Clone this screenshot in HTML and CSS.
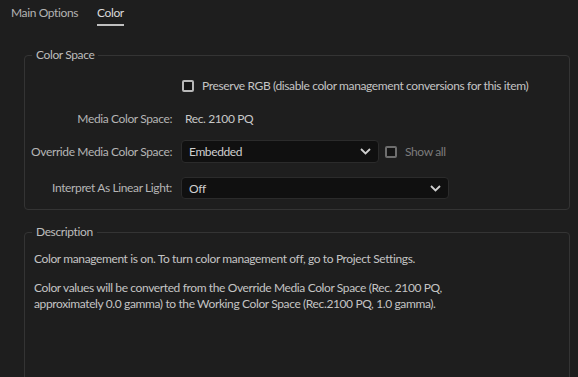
FILE: index.html
```html
<!DOCTYPE html>
<html>
<head>
<meta charset="utf-8">
<link rel="stylesheet" href="styles.css">
</head>
<body>
<div class="tabs">
  <span class="tab">Main Options</span>
  <span class="tab active">Color</span>
</div>

<fieldset class="group group-cs">
  <legend>Color Space</legend>
  <div class="grid">
    <span class="lbl"></span>
    <label class="check"><span class="box"></span><span>Preserve RGB (disable color management conversions for this item)</span></label>

    <span class="lbl">Media Color Space:</span>
    <span class="val">Rec. 2100 PQ</span>

    <span class="lbl">Override Media Color Space:</span>
    <div class="inline">
      <div class="select sel-short"><span>Embedded</span>
        <svg class="chev" width="11" height="7" viewBox="0 0 11 7"><path d="M1 1 L5.5 5.5 L10 1" fill="none" stroke="#cfcfcf" stroke-width="1.8"/></svg>
      </div>
      <label class="check dim"><span class="box"></span><span>Show all</span></label>
    </div>

    <span class="lbl last">Interpret As Linear Light:</span>
    <div class="select sel-long last"><span>Off</span>
      <svg class="chev" width="11" height="7" viewBox="0 0 11 7"><path d="M1 1 L5.5 5.5 L10 1" fill="none" stroke="#cfcfcf" stroke-width="1.8"/></svg>
    </div>
  </div>
</fieldset>

<fieldset class="group group-desc">
  <legend>Description</legend>
  <div class="desc">
    <p>Color management is on. To turn color management off, go to Project Settings.</p>
    <p>Color values will be converted from the Override Media Color Space (Rec. 2100 PQ,<br>approximately 0.0 gamma) to the Working Color Space (Rec.2100 PQ, 1.0 gamma).</p>
  </div>
</fieldset>
</body>
</html>
```

FILE: styles.css
```css
html, body {
  margin: 0;
  padding: 0;
  background: #1e1e1e;
  overflow: hidden;
  height: 377px;
}
body {
  font-family: Lato, "Open Sans", "Liberation Sans", sans-serif;
  font-size: 12px;
  letter-spacing: -0.38px;
  color: #c4c4c4;
}
.tabs {
  display: flex;
  gap: 19px;
  padding-left: 11px;
  height: 26px;
}
.tab {
  line-height: 16px;
  padding-top: 5px;
  height: 19px;
  color: #b3b3b3;
}
.tab.active {
  color: #dadada;
  border-bottom: 2px solid #bfbfbf;
}
.group {
  margin: 0 8px 0 24px;
  border: 1px solid #343434;
  border-radius: 4px;
  padding: 0 0 10px 0;
  min-width: 0;
}
.group legend {
  margin-left: 7px;
  padding: 0 4px;
  line-height: 16px;
  color: #bdbdbd;
}
.group-cs {
  margin-top: 21px;
}
.group-desc {
  margin-top: 14px;
  height: 200px;
}
.grid {
  display: grid;
  grid-template-columns: 147px 1fr;
  grid-template-rows: 23px 23px 23px 26px;
  column-gap: 9px;
  row-gap: 10px;
  padding-top: 11px;
  align-items: center;
}
.lbl {
  text-align: right;
  color: #b5b5b5;
  white-space: nowrap;
}
.lbl.last {
  align-self: end;
  line-height: 22px;
}
.select.last {
  align-self: end;
}
.val {
  padding-left: 4px;
  color: #c8c8c8;
}
.check {
  display: flex;
  align-items: center;
  gap: 8px;
  color: #c4c4c4;
}
.grid > .check {
  padding-left: 1px;
}
.box {
  width: 8px;
  height: 8px;
  border: 2px solid #b8b8b8;
  border-radius: 2px;
  background: #141414;
}
.check.dim {
  color: #7c7c7c;
}
.check.dim .box {
  border-color: #6e6e6e;
}
.inline {
  display: flex;
  align-items: center;
  gap: 6px;
}
.select {
  box-sizing: border-box;
  display: flex;
  align-items: center;
  justify-content: space-between;
  background: #101010;
  border: 1px solid #2b2b2b;
  border-radius: 4px;
  padding: 0 7px 0 7px;
  color: #cfcfcf;
}
.sel-short {
  width: 198px;
  height: 23px;
}
.sel-long {
  width: 268px;
  height: 22px;
}
.desc {
  padding: 11px 9px 0 9px;
  color: #c4c4c4;
  line-height: 16px;
}
.desc p {
  margin: 0 0 13px 0;
}
```
